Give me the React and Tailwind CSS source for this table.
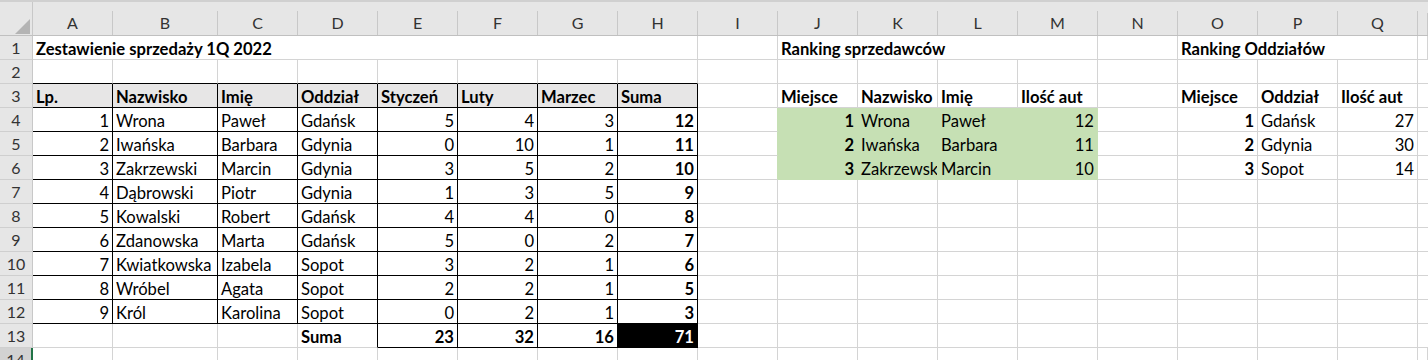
const COLS = ["A", "B", "C", "D", "E", "F", "G", "H", "I", "J", "K", "L", "M", "N", "O", "P", "Q"];

// cell contents: [value, bold, alignRight]
const cells = {
  A3: ["Lp.", 1], B3: ["Nazwisko", 1], C3: ["Imię", 1], D3: ["Oddział", 1],
  E3: ["Styczeń", 1], F3: ["Luty", 1], G3: ["Marzec", 1], H3: ["Suma", 1],
  J3: ["Miejsce", 1], K3: ["Nazwisko", 1], L3: ["Imię", 1], M3: ["Ilość aut", 1],
  O3: ["Miejsce", 1], P3: ["Oddział", 1], Q3: ["Ilość aut", 1],
  D13: ["Suma", 1], E13: ["23", 1, 1], F13: ["32", 1, 1], G13: ["16", 1, 1], H13: ["71", 1, 1],
};

const sales = [
  ["Wrona", "Paweł", "Gdańsk", 5, 4, 3, 12],
  ["Iwańska", "Barbara", "Gdynia", 0, 10, 1, 11],
  ["Zakrzewski", "Marcin", "Gdynia", 3, 5, 2, 10],
  ["Dąbrowski", "Piotr", "Gdynia", 1, 3, 5, 9],
  ["Kowalski", "Robert", "Gdańsk", 4, 4, 0, 8],
  ["Zdanowska", "Marta", "Gdańsk", 5, 0, 2, 7],
  ["Kwiatkowska", "Izabela", "Sopot", 3, 2, 1, 6],
  ["Wróbel", "Agata", "Sopot", 2, 2, 1, 5],
  ["Król", "Karolina", "Sopot", 0, 2, 1, 3],
];

sales.forEach((s, i) => {
  const r = i + 4;
  cells["A" + r] = [String(i + 1), 0, 1];
  cells["B" + r] = [s[0]];
  cells["C" + r] = [s[1]];
  cells["D" + r] = [s[2]];
  cells["E" + r] = [String(s[3]), 0, 1];
  cells["F" + r] = [String(s[4]), 0, 1];
  cells["G" + r] = [String(s[5]), 0, 1];
  cells["H" + r] = [String(s[6]), 1, 1];
});

const sellers = [["Wrona", "Paweł", 12], ["Iwańska", "Barbara", 11], ["Zakrzewski", "Marcin", 10]];
sellers.forEach((s, i) => {
  const r = i + 4;
  cells["J" + r] = [String(i + 1), 1, 1];
  cells["K" + r] = [s[0]];
  cells["L" + r] = [s[1]];
  cells["M" + r] = [String(s[2]), 0, 1];
});

const branches = [["Gdańsk", 27], ["Gdynia", 30], ["Sopot", 14]];
branches.forEach((b, i) => {
  const r = i + 4;
  cells["O" + r] = [String(i + 1), 1, 1];
  cells["P" + r] = [b[0]];
  cells["Q" + r] = [String(b[1]), 0, 1];
});

const inMain = (r, c) => r >= 3 && r <= 12 && c >= 1 && c <= 8;
const isGreen = (r, c) => r >= 4 && r <= 6 && c >= 10 && c <= 13;

function Cell({ r, c }) {
  const addr = COLS[c - 1] + r;
  const data = cells[addr];
  const green = isGreen(r, c);
  const grayFill = r === 3 && c <= 8;
  const blackFill = addr === "H13";

  let right = "border-r-[#d4d4d4]";
  if (inMain(r, c) || (r === 13 && c >= 4 && c <= 8)) right = "border-r-black";
  else if (green || (c === 9 && r >= 4 && r <= 6)) right = "border-r-[#c6e0b4]";

  let bottom = "border-b-[#d4d4d4]";
  if ((r >= 2 && r <= 12 && c <= 8) || (r === 13 && c >= 5 && c <= 8)) bottom = "border-b-black";
  else if (green) bottom = "border-b-[#c6e0b4]";

  let bg = "bg-white";
  if (green) bg = "bg-[#c6e0b4]";
  if (grayFill) bg = "bg-[#e7e6e6]";
  if (blackFill) bg = "bg-black";

  return (
    <div
      className={`h-[24px] border-r border-b ${right} ${bottom} ${bg} flex items-end overflow-hidden whitespace-nowrap px-[3px] ${
        data && data[2] ? "justify-end" : "justify-start"
      }`}
    >
      {data && (
        <span className={`leading-[20px] ${data[1] ? "font-bold" : ""} ${blackFill ? "text-white" : "text-black"}`}>
          {data[0]}
        </span>
      )}
    </div>
  );
}

function RowHeader({ n, active }) {
  return (
    <div
      className={`h-[24px] border-b border-r flex items-center justify-center text-[16px] text-[#333] ${
        active ? "bg-[#d2d2d2] border-r-2 border-r-[#217346] border-b-[#bdbdbd]" : "bg-[#e6e6e6] border-r-[#c8c8c8] border-b-[#cfcfcf]"
      }`}
    >
      {n}
    </div>
  );
}

function TitleCell({ span, text }) {
  return (
    <div
      className="h-[24px] border-r border-b border-r-[#d4d4d4] border-b-[#d4d4d4] bg-white flex items-end px-[3px] whitespace-nowrap overflow-hidden font-bold leading-[20px]"
      style={{ gridColumn: `span ${span}` }}
    >
      {text}
    </div>
  );
}

export default function App() {
  const rows = [2, 3, 4, 5, 6, 7, 8, 9, 10, 11, 12, 13];
  return (
    <div className="w-[1428px] h-[360px] overflow-hidden bg-white text-[16.6px] font-['Lato',sans-serif] text-black">
      <div className="h-[2px] bg-[#d0d0d0]" />
      <div className="grid grid-cols-[33px_80px_105px_repeat(15,80px)_10px]">
        {/* top band + column letters */}
        <div className="h-[34px] bg-[#e6e6e6] border-r border-b border-r-[#c8c8c8] border-b-[#c0c0c0] relative">
          <svg className="absolute left-[15px] top-[16px]" width="16" height="16" viewBox="0 0 16 16">
            <polygon points="0,16 15,16 15,1" fill="#b4b4b4" />
          </svg>
        </div>
        {[...COLS, "R"].map((l) => (
          <div key={l} className="h-[34px] bg-[#e6e6e6] border-b border-b-[#c0c0c0] flex flex-col">
            <div className="h-[11px]" />
            <div className="flex-1 border-r border-r-[#c8c8c8] flex items-center justify-center text-[16px] text-[#333]">
              {l === "R" ? "" : l}
            </div>
          </div>
        ))}

        {/* row 1 */}
        <RowHeader n={1} />
        <TitleCell span={8} text="Zestawienie sprzedaży 1Q 2022" />
        <TitleCell span={1} text="" />
        <TitleCell span={4} text="Ranking sprzedawców" />
        <TitleCell span={1} text="" />
        <TitleCell span={3} text="Ranking Oddziałów" />
        <TitleCell span={1} text="" />

        {rows.map((r) => (
          <div key={r} className="contents">
            <RowHeader n={r} />
            {COLS.map((_, i) => (
              <Cell key={i} r={r} c={i + 1} />
            ))}
            <div className="h-[24px] border-b border-b-[#d4d4d4]" />
          </div>
        ))}

        {/* row 14, partly visible */}
        <RowHeader n={14} active />
        {[...COLS, "R"].map((l) => (
          <div key={l} className="h-[24px] border-r border-r-[#d4d4d4]" />
        ))}
      </div>
    </div>
  );
}
